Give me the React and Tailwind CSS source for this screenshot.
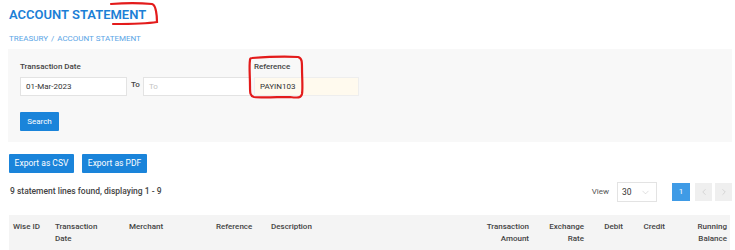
import { ChevronDown, ChevronLeft, ChevronRight } from "lucide-react";

const headers = [
  { label: ["Wise ID"], w: "w-[42px]", align: "text-left" },
  { label: ["Transaction", "Date"], w: "w-[74px]", align: "text-left" },
  { label: ["Merchant"], w: "w-[87px]", align: "text-left" },
  { label: ["Reference"], w: "w-[55px]", align: "text-left" },
  { label: ["Description"], w: "flex-1", align: "text-left" },
  { label: ["Transaction", "Amount"], w: "w-[60px]", align: "text-right" },
  { label: ["Exchange", "Rate"], w: "w-[55px]", align: "text-right" },
  { label: ["Debit"], w: "w-[39px]", align: "text-right" },
  { label: ["Credit"], w: "w-[42px]", align: "text-right" },
  { label: ["Running", "Balance"], w: "w-[62px]", align: "text-right" },
];

export default function App() {
  return (
    <div className="relative w-[735px] h-[250px] overflow-hidden bg-white font-['Roboto',sans-serif] text-[#333]">
      {/* Title */}
      <div className="pl-[9px] pt-[6px]">
        <h1 className="text-[13px] leading-[18px] font-semibold text-[#1c7fd6]">
          ACCOUNT STATEMENT
        </h1>
        <div className="mt-[9px] text-[8px] leading-[12px] text-[#5aa5e6]">
          TREASURY <span className="mx-[1px]">/</span> ACCOUNT STATEMENT
        </div>
      </div>

      {/* Filter panel */}
      <div className="mt-[4px] ml-[8px] w-[724px] h-[93px] bg-[#f8f8f8] pt-[12px] pl-[12px]">
        <div className="flex items-end">
          <div className="flex flex-col">
            <label className="text-[8px] leading-[12px] font-medium text-[#444] mb-[4px]">
              Transaction Date
            </label>
            <div className="w-[107px] h-[19px] bg-white border border-[#e3e3e3] text-[8px] leading-[17px] px-[5px] text-[#333]">
              01-Mar-2023
            </div>
          </div>
          <span className="ml-[4px] mr-[3px] mb-[6px] text-[8px] leading-[10px] font-medium text-[#444]">To</span>
          <div className="w-[108px] h-[19px] bg-white border border-[#e3e3e3] text-[8px] leading-[17px] px-[5px] text-[#c4c4c4]">
            To
          </div>
          <div className="flex flex-col ml-[3px]">
            <label className="text-[8px] leading-[12px] font-medium text-[#444] mb-[4px]">
              Reference
            </label>
            <div className="w-[105px] h-[19px] bg-[#fffaee] border border-[#eeeeee] text-[8px] leading-[17px] px-[5px] text-[#333]">
              PAYIN103
            </div>
          </div>
        </div>
        <button className="block mt-[16px] h-[19px] w-[39px] bg-[#1a84da] text-white text-[8px] rounded-[1px]">
          Search
        </button>
      </div>

      {/* Export buttons */}
      <div className="flex gap-[8px] mt-[12px] ml-[9px]">
        <button className="h-[19px] w-[65px] bg-[#1a84da] text-white text-[8.5px] rounded-[1px]">
          Export as CSV
        </button>
        <button className="h-[19px] w-[65px] bg-[#1a84da] text-white text-[8.5px] rounded-[1px]">
          Export as PDF
        </button>
      </div>

      {/* Count + pagination */}
      <div className="flex items-center justify-between ml-[10px] mr-[3px] mt-[9px] h-[20px]">
        <span className="text-[8.5px] leading-[12px] font-medium text-[#444] -mt-[3px]">
          9 statement lines found, displaying 1 - 9
        </span>
        <div className="flex items-center">
          <span className="text-[8px] text-[#555] mr-[8px]">View</span>
          <div className="w-[40px] h-[20px] border border-[#e3e3e3] bg-white flex items-center justify-between pl-[4px] pr-[5px] text-[8.5px] text-[#333]">
            30
            <ChevronDown size={11} strokeWidth={1} className="text-[#bbb]" />
          </div>
          <div className="ml-[15px] w-[18px] h-[18px] bg-[#3f9be6] text-white text-[8px] flex items-center justify-center">
            1
          </div>
          <div className="ml-[5px] w-[17px] h-[18px] bg-[#efefef] flex items-center justify-center">
            <ChevronLeft size={10} strokeWidth={1.2} className="text-[#bbb]" />
          </div>
          <div className="ml-[3px] w-[17px] h-[18px] bg-[#efefef] flex items-center justify-center">
            <ChevronRight size={10} strokeWidth={1.2} className="text-[#bbb]" />
          </div>
        </div>
      </div>

      {/* Table header */}
      <div className="mt-[13px] ml-[9px] w-[721px] h-[35px] bg-[#f4f4f4] flex pt-[6px] pl-[4px] pr-[3px] text-[8px] leading-[12px] font-medium text-[#444]">
        {headers.map((h, i) => (
          <div key={i} className={`${h.w} ${h.align} shrink-0`}>
            {h.label.map((l, j) => (
              <div key={j}>{l}</div>
            ))}
          </div>
        ))}
      </div>

      {/* Red annotations */}
      <svg className="absolute left-0 top-0 pointer-events-none" width="735" height="250">
        <path
          d="M111 4 C125 3, 140 3, 152 4 C155 5, 155 7, 156 11 C157 16, 157 20, 157 22 C145 24, 128 24, 113 24"
          fill="none"
          stroke="#e31b1b"
          strokeWidth="2.2"
          strokeLinecap="round"
        />
        <path
          d="M252 58 C265 57, 285 56, 298 57 C302 58, 302 62, 302 68 C302 78, 303 88, 302 94 C301 98, 298 98, 290 97 C278 97, 262 98, 254 97 C250 96, 250 93, 250 86 C250 76, 249 66, 250 60 C250 58, 251 58, 252 58 Z"
          fill="none"
          stroke="#e31b1b"
          strokeWidth="2.2"
          strokeLinecap="round"
        />
      </svg>
    </div>
  );
}
